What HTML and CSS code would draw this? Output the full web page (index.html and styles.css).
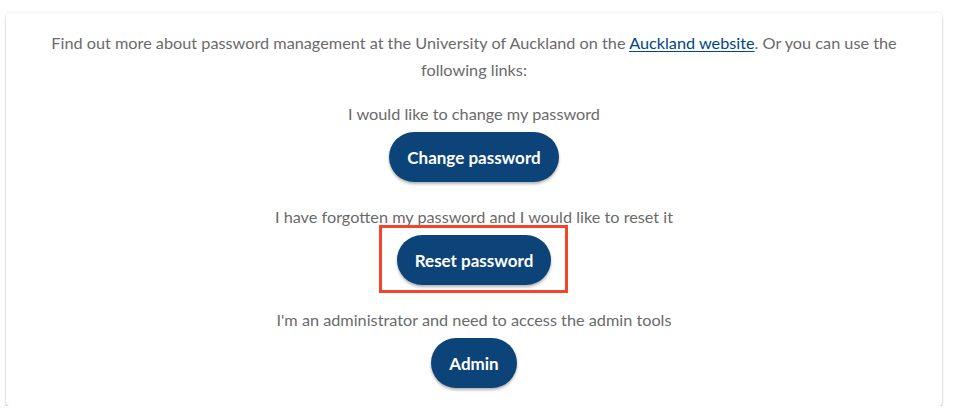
FILE: index.html
```html
<!DOCTYPE html>
<html lang="en">
<head>
<meta charset="utf-8">
<title>Password management</title>
<link rel="stylesheet" href="styles.css">
</head>
<body>
<main class="card">
  <p class="intro">Find out more about password management at the University of Auckland on the <a href="#" class="link">Auckland website</a>. Or you can use the following links:</p>
  <section class="option">
    <p class="label">I would like to change my password</p>
    <a href="#" class="btn">Change password</a>
  </section>
  <section class="option">
    <p class="label">I have forgotten my password and I would like to reset it</p>
    <span class="highlight-wrap">
      <a href="#" class="btn">Reset password</a>
      <span class="highlight"></span>
    </span>
  </section>
  <section class="option">
    <p class="label">I'm an administrator and need to access the admin tools</p>
    <a href="#" class="btn">Admin</a>
  </section>
</main>
</body>
</html>
```

FILE: styles.css
```css
html, body {
  margin: 0;
  background: #ffffff;
}
body {
  padding: 13px 11px 0 6px;
  font-family: Lato, "Open Sans", sans-serif;
  font-size: 16.25px;
  color: #6a6a6a;
}
.card {
  background: #fff;
  border-radius: 4px;
  box-shadow: 0 0 3px rgba(0,0,0,0.12), 0 2px 2px rgba(0,0,0,0.22);
  padding: 16px 40px 18px;
  text-align: center;
  display: flex;
  flex-direction: column;
  align-items: center;
}
.intro {
  margin: 0 0 17px;
  line-height: 27px;
}
.link {
  color: #00467f;
  text-decoration: underline;
  text-underline-offset: 2px;
}
.option {
  display: flex;
  flex-direction: column;
  align-items: center;
  margin-bottom: 21px;
}
.option:last-child {
  margin-bottom: 0;
}
.label {
  margin: 0 0 5px;
  line-height: 27px;
}
.btn {
  display: inline-flex;
  align-items: center;
  height: 50px;
  padding: 0 18px;
  border-radius: 25px;
  background: #0c4378;
  color: #fff;
  font-weight: 700;
  font-size: 17px;
  text-decoration: none;
  box-shadow: 0 2px 3px rgba(0,0,0,0.3);
  box-sizing: border-box;
}
.highlight-wrap {
  position: relative;
  display: inline-flex;
}
.highlight {
  position: absolute;
  top: -10px;
  bottom: -8px;
  left: -18px;
  right: -17px;
  border: 3px solid #f4452b;
  pointer-events: none;
}
```
